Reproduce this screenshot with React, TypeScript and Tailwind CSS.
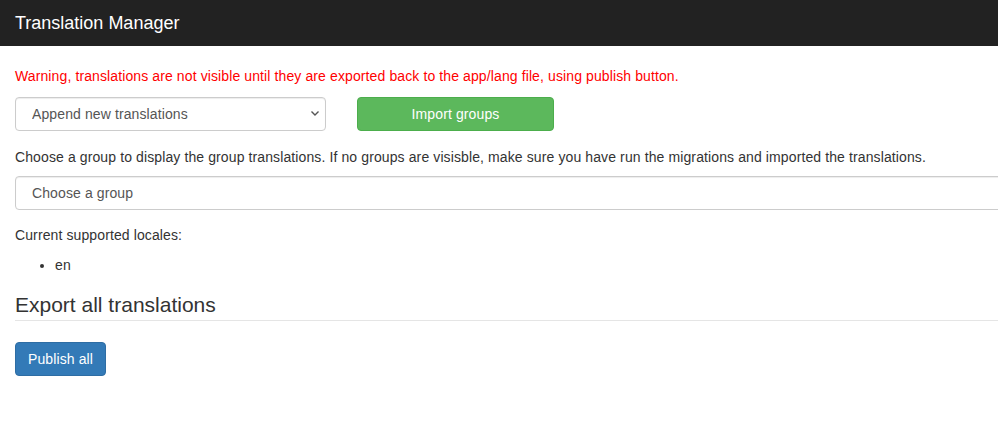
import { useState } from "react";

const App = () => {
  const [mode, setMode] = useState("append");
  const [group, setGroup] = useState("");

  return (
    <div className="min-h-screen w-full overflow-hidden bg-white font-['Liberation_Sans',Arial,sans-serif] text-[14px] leading-[20px] tracking-[0.11px] text-[#333]">
      <nav className="flex h-[46px] items-center bg-[#222] px-[15px]">
        <span className="text-[18px] leading-[20px] tracking-normal text-white">Translation Manager</span>
      </nav>

      <div className="mt-[20px] w-[1040px] px-[15px]">
        <p className="text-[#f00]">
          Warning, translations are not visible until they are exported back to the app/lang file, using publish button.
        </p>

        <div className="mt-[11px] flex items-center">
          <div className="relative w-[311px]">
            <select
              value={mode}
              onChange={(e) => setMode(e.target.value)}
              className="h-[34px] w-full appearance-none rounded-[4px] border border-[#ccc] bg-white pl-[16px] pr-8 text-[14px] text-[#555] shadow-[inset_0_1px_1px_rgba(0,0,0,0.075)] outline-none"
            >
              <option value="append">Append new translations</option>
              <option value="replace">Replace existing translations</option>
            </select>
            <svg
              className="pointer-events-none absolute right-[6px] top-[13px]"
              width="10"
              height="7"
              viewBox="0 0 10 7"
              fill="none"
              stroke="#555"
              strokeWidth="1.4"
            >
              <path d="M1.5 1.5 L5 5 L8.5 1.5" />
            </svg>
          </div>

          <button className="ml-[31px] h-[34px] w-[197px] rounded-[4px] border border-[#4cae4c] bg-[#5cb85c] text-[14px] text-white">
            Import groups
          </button>
        </div>

        <p className="mt-[16px]">
          Choose a group to display the group translations. If no groups are visisble, make sure you have run the migrations and imported the translations.
        </p>

        <select
          value={group}
          onChange={(e) => setGroup(e.target.value)}
          className="mt-[9px] h-[34px] w-full appearance-none rounded-[4px] border border-[#ccc] bg-white pl-[16px] text-[14px] text-[#555] shadow-[inset_0_1px_1px_rgba(0,0,0,0.075)] outline-none"
        >
          <option value="">Choose a group</option>
        </select>

        <p className="mt-[15px]">Current supported locales:</p>
        <ul className="mt-[10px] list-disc pl-[40px]">
          <li>en</li>
        </ul>

        <h3 className="mt-[18px] text-[21px] leading-[23px] tracking-normal text-[#333]">Export all translations</h3>
        <hr className="mt-[4px] border-t border-[#e5e5e5]" />

        <button className="mt-[21px] h-[34px] rounded-[4px] border border-[#2e6da4] bg-[#337ab7] px-[12px] text-[14px] text-white">
          Publish all
        </button>
      </div>
    </div>
  );
};

export default App;
